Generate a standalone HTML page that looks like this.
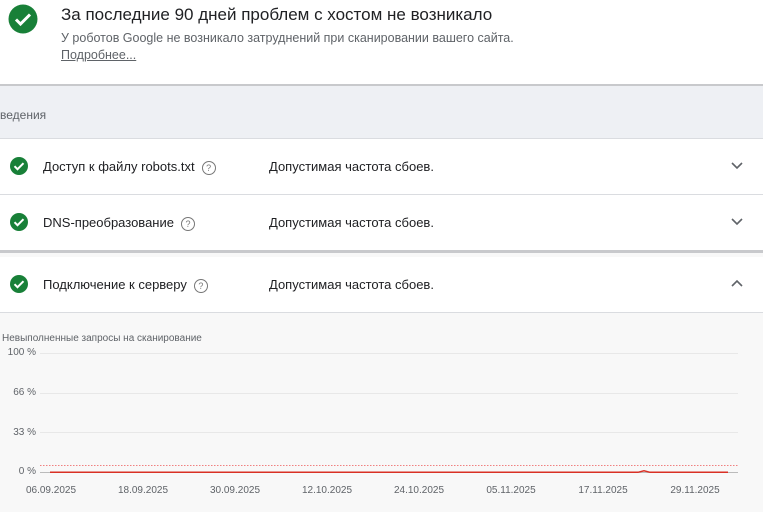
<!DOCTYPE html>
<html><head><meta charset="utf-8"><style>
body{margin:0;width:763px;height:512px;overflow:hidden;background:#f8f8f8;font-family:"Liberation Sans",sans-serif;position:relative}
.abs{position:absolute}
.row{position:absolute;left:0;width:763px;background:#fff;border-bottom:1px solid #dadce0}
.row .t{position:absolute;left:43px;font-size:13px;color:#202124}
.row .s{position:absolute;left:269px;font-size:13px;color:#202124}
.q{display:inline-block;width:12px;height:12px;border:1px solid #777;border-radius:50%;font-size:9px;line-height:12px;text-align:center;color:#777;margin-left:7px;vertical-align:0px}
.yl{position:absolute;right:727px;font-size:10px;color:#5f6368}
.xl{position:absolute;top:485px;font-size:10px;color:#5f6368;width:60px;margin-left:-30px;text-align:center}
.g{position:absolute;left:40px;width:698px;height:1px;background:#e8e8e8}
</style></head><body>
<div class="abs" style="left:0;top:0;width:763px;height:84px;background:#fff;border-bottom:2px solid #c8c9cc"></div>
<svg class="abs" style="left:8px;top:4px" width="30" height="30" viewBox="0 0 30 30"><circle cx="15" cy="15" r="14.5" fill="#188038"/><path d="M8 15.5l4.5 4.5 9.5-9.5" stroke="#fff" stroke-width="3" fill="none"/></svg>
<div class="abs" style="left:61px;top:5px;font-size:17px;color:#202124">За последние 90 дней проблем с хостом не возникало</div>
<div class="abs" style="left:61px;top:31px;font-size:12.5px;color:#5f6368">У роботов Google не возникало затруднений при сканировании вашего сайта.</div>
<div class="abs" style="left:61px;top:48px;font-size:12.5px;color:#5f6368;text-decoration:underline">Подробнее...</div>
<div class="abs" style="left:0;top:86px;width:763px;height:52px;background:#eef0f4;border-bottom:1px solid #dadce0"></div>
<div class="abs" style="left:0;top:108px;font-size:12px;color:#5f6368">ведения</div>

<div class="row" style="top:139px;height:55px"><span class="t" style="top:20px">Доступ к файлу robots.txt<span class="q">?</span></span><span class="s" style="top:20px">Допустимая частота сбоев.</span></div>
<div class="row" style="top:195px;height:55px;border-bottom:3px solid #c8c9cc"><span class="t" style="top:20px">DNS-преобразование<span class="q">?</span></span><span class="s" style="top:20px">Допустимая частота сбоев.</span></div>
<div class="row" style="top:257px;height:55px"><span class="t" style="top:20px">Подключение к серверу<span class="q">?</span></span><span class="s" style="top:20px">Допустимая частота сбоев.</span></div>
<svg class="abs" style="left:10px;top:157px" width="18" height="18"><circle cx="9" cy="9" r="9" fill="#188038"/><path d="M4.5 9.2l3 3 6-6" stroke="#fff" stroke-width="2" fill="none"/></svg>
<svg class="abs" style="left:10px;top:213px" width="18" height="18"><circle cx="9" cy="9" r="9" fill="#188038"/><path d="M4.5 9.2l3 3 6-6" stroke="#fff" stroke-width="2" fill="none"/></svg>
<svg class="abs" style="left:10px;top:275px" width="18" height="18"><circle cx="9" cy="9" r="9" fill="#188038"/><path d="M4.5 9.2l3 3 6-6" stroke="#fff" stroke-width="2" fill="none"/></svg>
<svg class="abs" style="left:731px;top:161px" width="12" height="10"><path d="M1 2l5 5 5-5" stroke="#5f6368" stroke-width="1.6" fill="none"/></svg>
<svg class="abs" style="left:731px;top:217px" width="12" height="10"><path d="M1 2l5 5 5-5" stroke="#5f6368" stroke-width="1.6" fill="none"/></svg>
<svg class="abs" style="left:731px;top:279px" width="12" height="10"><path d="M1 7l5-5 5 5" stroke="#5f6368" stroke-width="1.6" fill="none"/></svg>

<div class="abs" style="left:2px;top:333px;font-size:10px;color:#5f6368">Невыполненные запросы на сканирование</div>
<div class="g" style="top:353px"></div><div class="g" style="top:393px"></div><div class="g" style="top:432px"></div><div class="g" style="top:472px;background:#bbb"></div>
<div class="yl" style="top:347px">100 %</div><div class="yl" style="top:387px">66 %</div><div class="yl" style="top:427px">33 %</div><div class="yl" style="top:466px">0 %</div>
<svg class="abs" style="left:0;top:460px" width="763" height="20"><line x1="40" y1="5.5" x2="738" y2="5.5" stroke="#f08080" stroke-width="1" stroke-dasharray="1.5 1.5"/><path d="M50 12.3H638l6-1.5 6 1.5H728" stroke="#d93025" stroke-width="1.5" fill="none"/></svg>
<div class="xl" style="left:51px">06.09.2025</div><div class="xl" style="left:143px">18.09.2025</div><div class="xl" style="left:235px">30.09.2025</div><div class="xl" style="left:327px">12.10.2025</div><div class="xl" style="left:419px">24.10.2025</div><div class="xl" style="left:511px">05.11.2025</div><div class="xl" style="left:603px">17.11.2025</div><div class="xl" style="left:695px">29.11.2025</div>
</body></html>
